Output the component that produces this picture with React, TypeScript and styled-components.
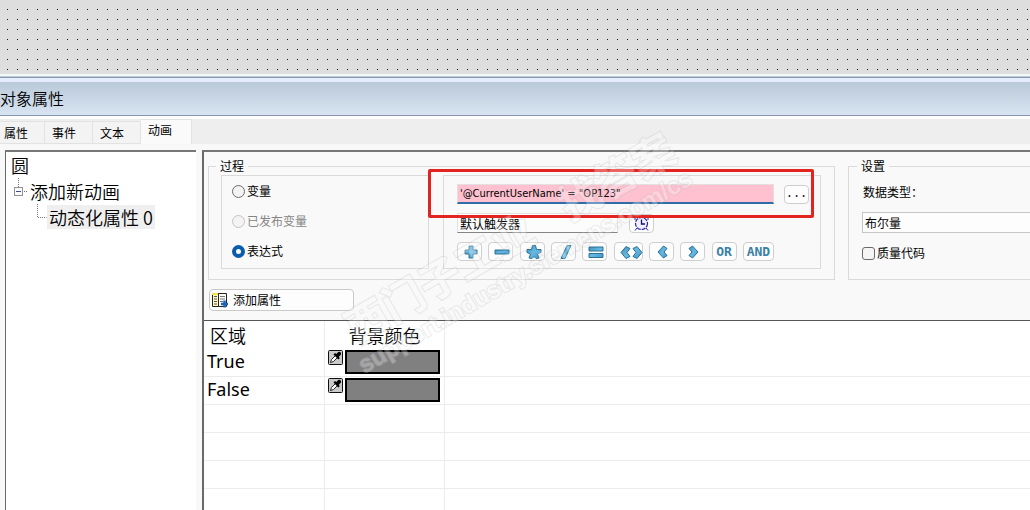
import React from "react";
import styled, { createGlobalStyle } from "styled-components";

const uiFont = `"Noto Sans CJK SC", "Noto Sans", sans-serif`;
const latinFont = `"Noto Sans", "Noto Sans CJK SC", sans-serif`;

const GlobalStyle = createGlobalStyle`
  * { box-sizing: border-box; }
  body { margin: 0; background: #f8f8f8; color: #000; font: 12px/14px ${uiFont}; }
  button, input, select { font: inherit; color: inherit; margin: 0; }
`;

const Page = styled.div`
  display: flex;
  flex-direction: column;
  height: 100vh;
  overflow: hidden;
`;

const DotCanvas = styled.div`
  flex: none;
  height: 74px;
  background-color: #dedede;
  background-image: conic-gradient(from 0deg at 1px 1px, transparent 75%, #111 75%);
  background-size: 10px 10px;
  background-position: 7px 9px;
`;

const WindowFrame = styled.div`
  flex: none;
  height: 8px;
  background: #e5ecfb;
  border-top: 2px solid #f2f7fa;
  box-shadow: inset 0 1px #c0cad4, inset 0 2px #8a99b2;
`;

const TitleBar = styled.h1`
  flex: none;
  margin: 0;
  height: 34px;
  font-size: 16px;
  font-weight: 350;
  line-height: 32px;
  background: linear-gradient(#bac9d8, #d8e4f2);
  border-bottom: 1px solid #8796ab;
`;

const TabBar = styled.div`
  flex: none;
  display: flex;
  align-items: flex-end;
  height: 28px;
  background: linear-gradient(#fdfdfd 3px, #eeeeee 3px);
`;

const Tab = styled.button<{ $active?: boolean; $first?: boolean }>`
  width: ${(p) => (p.$active ? 51 : p.$first ? 45 : 48)}px;
  height: ${(p) => (p.$active ? 25 : 23)}px;
  padding: ${(p) => (p.$active ? "0 0 4px 7px" : p.$first ? "0 0 0 4px" : "0 0 0 7px")};
  text-align: left;
  background: ${(p) => (p.$active ? "#fafafa" : "#f3f3f3")};
  border: 1px solid #e2e2e2;
  border-width: 1px 1px ${(p) => (p.$active ? 0 : 1)}px 0;
`;

const Body = styled.div`
  flex: 1;
  min-height: 0;
  display: flex;
  gap: 6px;
  padding: 6px 0 0 5px;
  background: #f8f8f8;
`;

const Sunken = styled.div`
  border: solid #6a6a6a;
  border-width: 2px 0 0 2px;
  border-top-color: #777;
`;

const TreePanel = styled(Sunken)`
  flex: none;
  width: 191px;
  background: #fff;
  border-left-width: 1px;
`;

const TreeList = styled.ul`
  list-style: none;
  margin: 0;
  padding: 0;
  font-size: 18px;
  font-weight: 350;
  line-height: 24px;
`;

const TreeRow = styled.li<{ $level: number }>`
  display: flex;
  align-items: center;
  height: 26px;
  padding-left: ${(p) => [3, 6, 30][p.$level]}px;
`;

const TreeLabel = styled.span<{ $selected?: boolean }>`
  padding: 0 2px;
  background: ${(p) => (p.$selected ? "#efefef" : "transparent")};
`;

const Detail = styled(Sunken)`
  position: relative;
  flex: 1;
  min-width: 0;
  display: flex;
  flex-direction: column;
  background: #f9f9f9;
`;

const Settings = styled.div`
  flex: none;
  display: flex;
  gap: 13px;
  padding: 7px 0 0 4px;
`;

const Fieldset = styled.fieldset<{ $open?: boolean }>`
  flex: ${(p) => (p.$open ? "1" : "none")};
  min-width: 0;
  height: 121px;
  margin: 0;
  padding: ${(p) => (p.$open ? "0 0 0 13px" : "2px 13px 11px 12px")};
  border: 1px solid #dadada;
  border-right-width: ${(p) => (p.$open ? 0 : 1)}px;
`;

const Legend = styled.legend`
  margin-left: -5px;
  padding: 0 4px;
  line-height: 14px;
`;

const Groups = styled.div`
  display: flex;
  gap: 14px;
`;

const Group = styled.div`
  height: 94px;
  border: 1px solid #dadada;
`;

const SourceGroup = styled(Group)`
  width: 208px;
  padding-left: 10px;
`;

const ExpressionGroup = styled(Group)`
  position: relative;
  width: 378px;
  padding: 8px 11px 0 13px;
  display: flex;
  flex-direction: column;
  gap: 9px;
`;

const Choice = styled.label<{ $disabled?: boolean }>`
  display: flex;
  align-items: center;
  gap: 2px;
  height: 30px;
  color: ${(p) => (p.$disabled ? "#858585" : "#000")};
`;

const Radio = styled.input`
  appearance: none;
  width: 13px;
  height: 13px;
  border-radius: 50%;
  border: 1px solid #6c6c6c;
  background: #f3f3f3;
  &:disabled { border-color: #c4c4c4; }
  &:checked { border: 4px solid #0b5cad; background: #fff; }
`;

const CheckBox = styled.input`
  appearance: none;
  width: 13px;
  height: 13px;
  border-radius: 3px;
  border: 1px solid #6a6a6a;
  background: #f5f5f5;
`;

const Line = styled.div<{ $gap: number }>`
  display: flex;
  align-items: center;
  gap: ${(p) => p.$gap}px;
`;

const Operators = styled.div`
  display: flex;
  justify-content: space-between;
  width: 317px;
`;

const ExpressionInput = styled.input`
  width: 317px;
  height: 20px;
  padding: 0 2px;
  font: 11px/14px "DejaVu Sans Condensed", "Noto Sans", sans-serif;
  background: #ffc0cf;
  border: 1px solid #e6dfe1;
  border-bottom: 2px solid #2e6da8;
`;

const TriggerInput = styled.input`
  width: 161px;
  height: 20px;
  padding: 0 2px;
  background: #fcfcfc;
  border: 1px solid #e0e0e0;
  border-bottom-color: #858585;
`;

const SmallButton = styled.button<{ $width?: number }>`
  flex: none;
  display: flex;
  align-items: center;
  justify-content: center;
  width: ${(p) => p.$width ?? 25}px;
  height: 19px;
  padding: 0;
  background: #fdfdfd;
  border: 1px solid #cfcfcf;
  border-radius: 4px;
  svg { flex: none; }
`;

const WordOp = styled.span`
  font: bold 13px/16px "DejaVu Sans Mono", monospace;
  color: #3a81a6;
`;

const Ellipsis = styled.span`
  font: 12px/14px "Liberation Mono", monospace;
`;

const Highlight = styled.div`
  position: absolute;
  left: -16px;
  top: -7px;
  width: 386px;
  height: 49px;
  border: 3px solid #e3231f;
  border-radius: 2px;
  pointer-events: none;
`;

const TypeLabel = styled.label`
  display: block;
  padding: 12px 0 13px 1px;
`;

const TypeSelect = styled.select`
  display: block;
  appearance: none;
  width: 100%;
  height: 21px;
  padding: 0 2px;
  background: #fdfdfd;
  border: 1px solid #c6c6c6;
  border-right-width: 0;
  border-radius: 0;
`;

const CheckRow = styled.label`
  display: flex;
  align-items: center;
  gap: 2px;
  margin-top: 13px;
`;

const AddButton = styled.button`
  flex: none;
  align-self: flex-start;
  display: flex;
  align-items: center;
  gap: 5px;
  width: 145px;
  height: 22px;
  margin: 9px 0 9px 5px;
  padding: 0 1px;
  background: #fdfdfd;
  border: 1px solid #c9c9c9;
  border-radius: 4px;
`;

const TableArea = styled.div`
  flex: 1;
  min-height: 0;
  overflow: hidden;
  background: #fff;
  border-top: 1px solid #555;
`;

const Table = styled.table`
  width: 100%;
  table-layout: fixed;
  border-collapse: separate;
  border-spacing: 0;
  font: 18px/24px ${latinFont};
  th, td {
    height: 28px;
    padding: 0 3px 2px;
    border: solid #ececec;
    border-width: 0 1px 1px 0;
    text-align: left;
    font-weight: 400;
  }
  td { vertical-align: top; }
  th { border-bottom-width: 0; font-family: ${uiFont}; font-weight: 350; padding: 0 6px; }
  th + th { padding: 0; text-align: center; }
  th:last-child, td:last-child { border-right-width: 0; }
`;

const Col = styled.col<{ $width?: number }>`
  width: ${(p) => (p.$width ? `${p.$width}px` : "auto")};
`;

const ColorCell = styled.div`
  display: flex;
  gap: 2px;
  padding-top: 1px;
`;

const PickButton = styled.button`
  width: 15px;
  height: 15px;
  padding: 0;
  display: flex;
  background: none;
  border: 0;
`;

const Swatch = styled.button`
  width: 95px;
  height: 24px;
  padding: 0;
  background: #808080;
  border: 2px solid #000;
`;

const Watermark = styled.div`
  position: absolute;
  left: 158px;
  top: 152px;
  transform: rotate(-30deg);
  transform-origin: 0 100%;
  white-space: nowrap;
  pointer-events: none;
  color: #fcfcfc;
  -webkit-text-stroke: 2px #bdbdbd;
  paint-order: stroke fill;
  opacity: 0.3;
`;

const MarkTitle = styled.div`
  display: flex;
  gap: 36px;
  padding-left: 14px;
  font: bold 42px/50px ${uiFont};
`;

const MarkUrl = styled.div`
  padding-left: 6px;
  font: bold 24px/28px "Liberation Sans", sans-serif;
`;

const ops: { name: string; d: string; width?: number }[] = [
  { name: "加", d: "M12 3h4v4h4v4h-4v4h-4v-4h-4v-4h4z" },
  { name: "减", d: "M7 7h14v4h-14z" },
  { name: "乘", d: "M12.500 2.500h3l1 4h4.500v3l-3.500 1.500 1.500 4-3 .5-2-2-2 2-3-.5 1.500-4-3.500-1.500v-3h4.500z" },
  { name: "除", d: "M16 2.500h4l-6 13h-4z" },
  { name: "等于", d: "M7 4h14v4h-14zM7 10.500h14v4h-14z" },
  { name: "不等于", d: "M7 9.500l5-6 4 2-3 4 3 4-4 2zM28 9.500l-5-6-4 2 3 4-3 4 4 2z", width: 29 },
  { name: "小于", d: "M9 9l5.500-6 3.500 2.500-3 3.500 3 3.500-3.500 2.500z" },
  { name: "大于", d: "M18 9l-5.500-6-3.500 2.500 3 3.500-3 3.500 3.500 2.500z" },
];

const OperatorIcon = ({ d, width = 25 }: { d: string; width?: number }) => (
  <svg width={width} height="18" viewBox={`0 0 ${width} 18`} aria-hidden="true">
    <defs>
      <linearGradient id="opBlue" x1="0" y1="0" x2="1" y2="1">
        <stop offset="0" stopColor="#3f8fb8" />
        <stop offset="0.5" stopColor="#68b9e2" />
        <stop offset="1" stopColor="#3f95c8" />
      </linearGradient>
    </defs>
    <path d={d} fill="url(#opBlue)" stroke="#2b7196" strokeWidth="1" />
  </svg>
);

const ClockIcon = () => (
  <svg width="17" height="17" viewBox="0 0 17 17" fill="none" stroke="#2a24a8" aria-hidden="true">
    <circle cx="8.500" cy="8.500" r="6" strokeDasharray="4 1" strokeWidth="1.200" fill="#f0f0ff" />
    <path d="M8.500 4.500v4.500h3.500" stroke="#15106a" strokeWidth="1.300" />
    <path d="M2 5V2h3M12 2h3v3M4 13l-2 2.500M13 13l2 2.500" />
  </svg>
);

const AddPropertyIcon = () => (
  <svg width="17" height="17" viewBox="0 0 17 17" aria-hidden="true">
    <path d="M1.500 1.500h6v13h-6z" fill="#fff9c0" stroke="#222" />
    <path d="M7.500 1.500h8v13h-8z" fill="#fff" stroke="#222" />
    <path d="M1 1h6v2h-6z" fill="#f4e04a" />
    <path d="M3 4.500h3M3 7h3M3 9.500h3M3 12h3" stroke="#555" />
    <path d="M9 4.500h5M9 7h5M9 9.500h3" stroke="#777" />
    <path d="M13.500 8.500v7M10 12h7" stroke="#1c62b8" strokeWidth="2.500" />
  </svg>
);

const PipetteIcon = () => (
  <svg width="15" height="15" viewBox="0 0 15 15" aria-hidden="true">
    <rect x="0.500" y="0.500" width="14" height="14" rx="1" fill="#c9c9c9" stroke="#111" />
    <path d="M2.500 12.500l1-3 4-4 2 2-4 4z" fill="#fff" stroke="#111" strokeWidth="0.900" />
    <path d="M5.500 4.500l1.500-1.500 1.300 1 2-2q3-.7 2.700 2.500l-2.200 2.200 1 1.500-1.500 1.300z" fill="#000" />
  </svg>
);

const ExpandGuide = () => (
  <svg width="16" height="26" viewBox="0 0 16 26" aria-hidden="true">
    <path d="M6.500 0v9M12 13.500h4" stroke="#777" strokeDasharray="1 1" />
    <rect x="2.500" y="9.500" width="8" height="8" fill="#fafafa" stroke="#929292" />
    <path d="M4 13.500h5" stroke="#3a4f8c" />
  </svg>
);

const ChildGuide = () => (
  <svg width="11" height="26" viewBox="0 0 11 26" aria-hidden="true">
    <path d="M1.500 0v13.500h9" fill="none" stroke="#777" strokeDasharray="1 1" />
  </svg>
);

const regions = ["True", "False"];
const blankRows = [0, 1, 2, 3];

export default function App() {
  return (
    <Page>
      <GlobalStyle />
      <DotCanvas />
      <WindowFrame />
      <TitleBar>对象属性</TitleBar>
      <TabBar role="tablist">
        <Tab role="tab" $first>属性</Tab>
        <Tab role="tab">事件</Tab>
        <Tab role="tab">文本</Tab>
        <Tab role="tab" aria-selected="true" $active>动画</Tab>
      </TabBar>
      <Body>
        <TreePanel>
          <TreeList>
            <TreeRow $level={0}><TreeLabel>圆</TreeLabel></TreeRow>
            <TreeRow $level={1}><ExpandGuide /><TreeLabel>添加新动画</TreeLabel></TreeRow>
            <TreeRow $level={2}><ChildGuide /><TreeLabel $selected>动态化属性 0</TreeLabel></TreeRow>
          </TreeList>
        </TreePanel>
        <Detail>
          <Settings>
            <Fieldset>
              <Legend>过程</Legend>
              <Groups>
                <SourceGroup>
                  <Choice><Radio type="radio" name="source" />变量</Choice>
                  <Choice $disabled><Radio type="radio" name="source" disabled />已发布变量</Choice>
                  <Choice><Radio type="radio" name="source" defaultChecked />表达式</Choice>
                </SourceGroup>
                <ExpressionGroup>
                  <Line $gap={10}>
                    <ExpressionInput aria-label="表达式" defaultValue={`'@CurrentUserName' = "OP123"`} />
                    <SmallButton aria-label="浏览"><Ellipsis>...</Ellipsis></SmallButton>
                  </Line>
                  <Line $gap={11}>
                    <TriggerInput aria-label="触发器" defaultValue="默认触发器" />
                    <SmallButton aria-label="定时"><ClockIcon /></SmallButton>
                  </Line>
                  <Operators>
                    {ops.map((op) => (
                      <SmallButton key={op.name} aria-label={op.name} $width={op.width}>
                        <OperatorIcon d={op.d} width={op.width} />
                      </SmallButton>
                    ))}
                    <SmallButton><WordOp>OR</WordOp></SmallButton>
                    <SmallButton $width={31}><WordOp>AND</WordOp></SmallButton>
                  </Operators>
                  <Highlight />
                </ExpressionGroup>
              </Groups>
            </Fieldset>
            <Fieldset $open>
              <Legend>设置</Legend>
              <TypeLabel htmlFor="dataType">数据类型：</TypeLabel>
              <TypeSelect id="dataType"><option>布尔量</option></TypeSelect>
              <CheckRow><CheckBox type="checkbox" />质量代码</CheckRow>
            </Fieldset>
          </Settings>
          <AddButton><AddPropertyIcon />添加属性</AddButton>
          <TableArea>
            <Table>
              <colgroup><Col $width={121} /><Col $width={120} /><Col /></colgroup>
              <thead>
                <tr><th>区域</th><th>背景颜色</th><th /></tr>
              </thead>
              <tbody>
                {regions.map((name) => (
                  <tr key={name}>
                    <td>{name}</td>
                    <td>
                      <ColorCell>
                        <PickButton aria-label="取色"><PipetteIcon /></PickButton>
                        <Swatch aria-label="背景颜色" />
                      </ColorCell>
                    </td>
                    <td />
                  </tr>
                ))}
                {blankRows.map((row) => (
                  <tr key={row}><td /><td /><td /></tr>
                ))}
              </tbody>
            </Table>
          </TableArea>
          <Watermark aria-hidden="true">
            <MarkTitle><span>西门子工业</span><span>找答案</span></MarkTitle>
            <MarkUrl>support.industry.siemens.com/cs</MarkUrl>
          </Watermark>
        </Detail>
      </Body>
    </Page>
  );
}
